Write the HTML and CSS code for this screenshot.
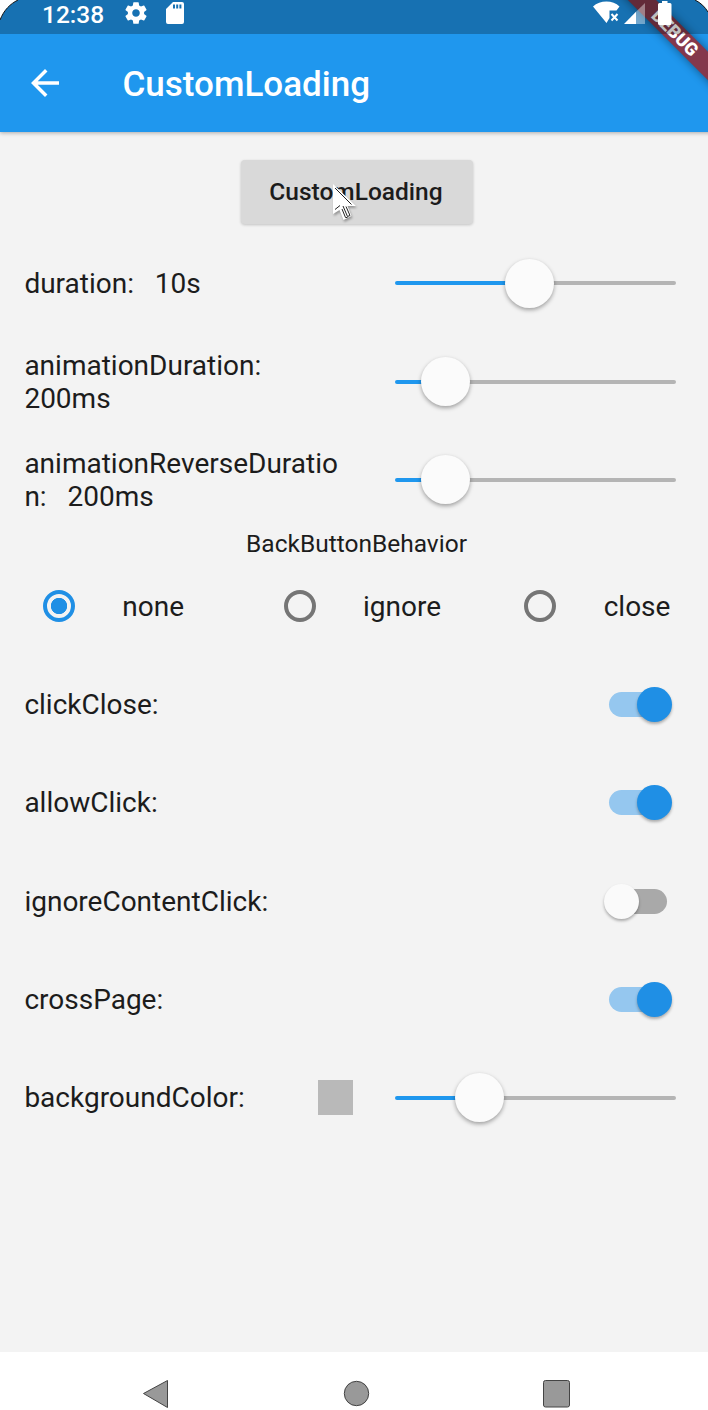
FILE: index.html
```html
<!DOCTYPE html>
<html lang="en">
<head>
<meta charset="utf-8">
<title>CustomLoading</title>
<link rel="stylesheet" href="styles.css">
</head>
<body>
<div class="viewport">
<div class="screen">
  <header class="appbar">
    <svg class="back" viewBox="0 0 24 24"><path d="M20 11H7.83l5.59-5.59L12 4l-8 8 8 8 1.41-1.41L7.83 13H20v-2z"/></svg>
    <h1 class="title">CustomLoading</h1>
  </header>
  <main class="content">
    <div class="action"><button class="button">CustomLoading</button></div>
    <div class="row"><span class="label">duration:&nbsp;&nbsp; 10s</span><div class="slider" style="--pos:134px"><i class="thumb"></i></div></div>
    <div class="row"><span class="label">animationDuration:<br>200ms</span><div class="slider" style="--pos:50px"><i class="thumb"></i></div></div>
    <div class="row"><span class="label">animationReverseDuratio<br>n:&nbsp;&nbsp; 200ms</span><div class="slider" style="--pos:50px"><i class="thumb"></i></div></div>
    <div class="subtitle">BackButtonBehavior</div>
    <div class="radios">
      <div class="option"><i class="radio checked"></i><span>none</span></div>
      <div class="option"><i class="radio"></i><span>ignore</span></div>
      <div class="option"><i class="radio"></i><span>close</span></div>
    </div>
    <div class="row"><span class="label">clickClose:</span><i class="switch on"></i></div>
    <div class="row"><span class="label">allowClick:</span><i class="switch on"></i></div>
    <div class="row"><span class="label">ignoreContentClick:</span><i class="switch"></i></div>
    <div class="row"><span class="label">crossPage:</span><i class="switch on"></i></div>
    <div class="row"><span class="label">backgroundColor:</span><i class="swatch"></i><div class="slider" style="--pos:84px"><i class="thumb"></i></div></div>
  </main>
  <nav class="navbar">
    <svg viewBox="0 0 713 58">
      <path class="navicon" d="M143.5 41.5L167.500 28.500V55.500z"/>
      <circle class="navicon" cx="356.500" cy="41.500" r="12.200"/>
      <rect class="navicon" x="543.500" y="28.500" width="26" height="26.500" rx="2"/>
    </svg>
  </nav>
</div>
<div class="ribbon">DEBUG</div>
<div class="statusbar">
  <span class="clock">12:38</span>
  <svg class="gear" viewBox="0 0 24 24"><path d="M19.43 12.98c.04-.32.07-.64.07-.98s-.03-.66-.07-.98l2.110-1.650c.19-.15.24-.42.12-.64l-2-3.460c-.12-.22-.39-.3-.61-.22l-2.490 1c-.52-.4-1.080-.73-1.690-.98l-.38-2.650C14.460 2.180 14.250 2 14 2h-4c-.25 0-.46.18-.49.42l-.38 2.650c-.61.25-1.170.59-1.690.98l-2.490-1c-.23-.09-.49 0-.61.22l-2 3.460c-.13.22-.07.49.12.64l2.110 1.650c-.04.32-.07.65-.07.98s.03.66.07.98l-2.110 1.650c-.19.15-.24.42-.12.64l2 3.460c.12.22.39.3.61.22l2.490-1c.52.4 1.080.73 1.690.98l.38 2.650c.03.24.24.42.49.42h4c.25 0 .46-.18.49-.42l.38-2.650c.61-.25 1.170-.59 1.690-.98l2.490 1c.23.09.49 0 .61-.22l2-3.460c.12-.22.07-.49-.12-.64l-2.110-1.650zM12 15.500c-1.930 0-3.500-1.570-3.500-3.500s1.570-3.500 3.500-3.500 3.500 1.570 3.500 3.500-1.570 3.500-3.500 3.500z"/></svg>
  <svg class="sdcard" viewBox="0 0 18 22"><path fill-rule="evenodd" d="M7 0H16a2 2 0 0 1 2 2V20a2 2 0 0 1-2 2H2a2 2 0 0 1-2-2V7zM7 2.500V6.500H9V2.500zM10.200 2.500V6.500H12.200V2.500zM13.400 2.500V6.500H15.400V2.500z"/></svg>
  <svg class="signals" viewBox="0 0 84 26">
    <path d="M0 6.500C7-.2 20-.2 26.500 6.500L23.500 10.500H16.500V18L13.500 23z"/>
    <path class="cross" d="M18.500 14L24.500 20.500M24.500 14L18.500 20.500"/>
    <path class="faint" d="M43 11.800L52 3V24H43z"/>
    <path d="M31 24L43 11.800V24z"/>
    <path d="M65 4.500a1.500 1.500 0 0 1 1.500-1.500H69V1H74.500V3H77a1.500 1.500 0 0 1 1.500 1.500V23.500a1.500 1.500 0 0 1-1.500 1.500H66.500a1.500 1.500 0 0 1-1.500-1.500z"/>
  </svg>
</div>
<svg class="corner left" viewBox="0 0 18 20"><path d="M0 0H18C10 4 4 10 0 20z"/><path class="edge" d="M18 0C10 4 4 10 0 20"/></svg>
<svg class="corner right" viewBox="0 0 13 12"><path d="M0 0H13V12C10 7 6 3 0 0z"/><path class="edge" d="M0 0C6 3 10 7 13 12"/></svg>
<svg class="pointer" viewBox="0 0 26 38"><path class="body" d="M1 1L24 23H15.500L19.500 33L11.500 37L7.500 27L1 31z"/><path class="ink" d="M3 5L19.500 21.500M3 26.500L8 22.500M11 23L15.500 33.500L18 32.500L14 23.500M10 26L13.500 34.500H15.500"/></svg>
</div>
</body>
</html>
```
FILE: styles.css
```css
* { box-sizing: border-box; }
body { margin: 0; font-family: Roboto, sans-serif; color: #1c1c1c; }
.viewport { position: relative; width: 708px; height: 1410px; overflow: hidden; background: #f3f3f3; }
/* The device screen is slightly wider than the visible window. */
.screen { width: 713px; height: 1410px; display: flex; flex-direction: column; }
.appbar { height: 132px; padding: 34px 0 0 24px; flex: none; display: flex; align-items: center; background: #1f97ee; box-shadow: 0 1px 4px rgba(0,0,0,.3); }
.back { width: 42px; height: 42px; fill: #fff; }
.title { margin: 4px 0 0 56.500px; font-size: 35px; font-weight: 500; color: #fff; line-height: 42px; }
.content { flex: 1; padding-top: 17px; }
.action { height: 85.200px; display: flex; justify-content: center; align-items: center; }
.button { width: 232px; height: 64px; padding: 0 2px 0 0; margin-left: 1px; border: 0; border-radius: 4px; background: #d9d9d9; color: #1c1c1c; font: 500 24.500px Roboto, sans-serif; box-shadow: 0 1px 3px rgba(0,0,0,.2); }
.row { height: 98.250px; padding: 0 37px 0 24.400px; display: flex; align-items: center; font-size: 28px; line-height: 33px; }
.label { flex: 1; }
.slider { width: 281px; height: 4px; border-radius: 2px; display: flex; align-items: center; background: linear-gradient(to right, #1f97ee var(--pos), #b4b4b4 var(--pos)); }
.thumb { flex: none; width: 49px; height: 49px; margin-left: calc(var(--pos) - 24px); border-radius: 50%; background: #fbfbfb; box-shadow: 0 2px 4px rgba(0,0,0,.35); }
.subtitle { height: 28.300px; line-height: 29px; text-align: center; font-size: 24.500px; }
.radios { height: 98.250px; padding-left: 43px; display: grid; grid-template-columns: repeat(3, 240.700px); align-items: center; font-size: 28px; line-height: 33px; }
.option { display: flex; align-items: center; gap: 47.300px; }
.radio { width: 32px; height: 32px; border: 4px solid #757575; border-radius: 50%; }
.radio.checked { border-color: #1f8fe5; background: radial-gradient(circle, #1f8fe5 7.800px, transparent 8.500px); }
.switch { width: 58px; height: 25px; margin-right: 9px; border-radius: 13px; display: flex; align-items: center; background: #a9a9a9; }
.switch::before { content: ""; flex: none; width: 35px; height: 35px; margin-left: -5px; border-radius: 50%; background: #fafafa; box-shadow: 0 2px 3px rgba(0,0,0,.3); }
.switch.on { background: #95c7ef; }
.switch.on::before { margin-left: 28px; background: #1f8fe5; }
.swatch { width: 35px; height: 35px; margin-right: 42px; background: #b9b9b9; }
.navbar { height: 58px; flex: none; background: #fff; }
.navbar svg { display: block; width: 713px; height: 58px; }
.navicon { fill: #999; stroke: #444; stroke-width: 1; }
.ribbon { position: absolute; left: 577px; top: 24.500px; width: 200px; height: 20px; padding-right: 6px; transform: rotate(45deg); background: #84384c; color: #fff; text-align: center; font-size: 18px; line-height: 20px; font-weight: 900; box-shadow: 0 0 10px rgba(0,0,0,.45); }
.statusbar { position: absolute; left: 0; top: 0; width: 708px; height: 34px; padding-left: 42px; display: flex; align-items: flex-start; background: rgba(0,0,0,.25); color: #fff; fill: #fff; }
.clock { width: 81px; font-size: 24.500px; font-weight: 500; line-height: 29px; }
.gear { width: 26px; height: 26px; }
.sdcard { width: 18px; height: 22px; margin: 2px 0 0 17px; }
.signals { width: 84px; height: 26px; margin-left: 409px; }
.cross { stroke: #fff; stroke-width: 2; }
.faint { opacity: .4; }
.corner { position: absolute; top: 0; fill: #fff; }
.left { left: 0; width: 18px; height: 20px; }
.right { right: 0; width: 13px; height: 12px; }
.edge { fill: none; stroke: #111; }
.pointer { position: absolute; left: 332px; top: 183px; width: 26px; height: 38px; filter: drop-shadow(1px 2px 1px rgba(0,0,0,.3)); }
.body { fill: #fff; }
.ink { fill: none; stroke: #222; stroke-width: 1; }
```
